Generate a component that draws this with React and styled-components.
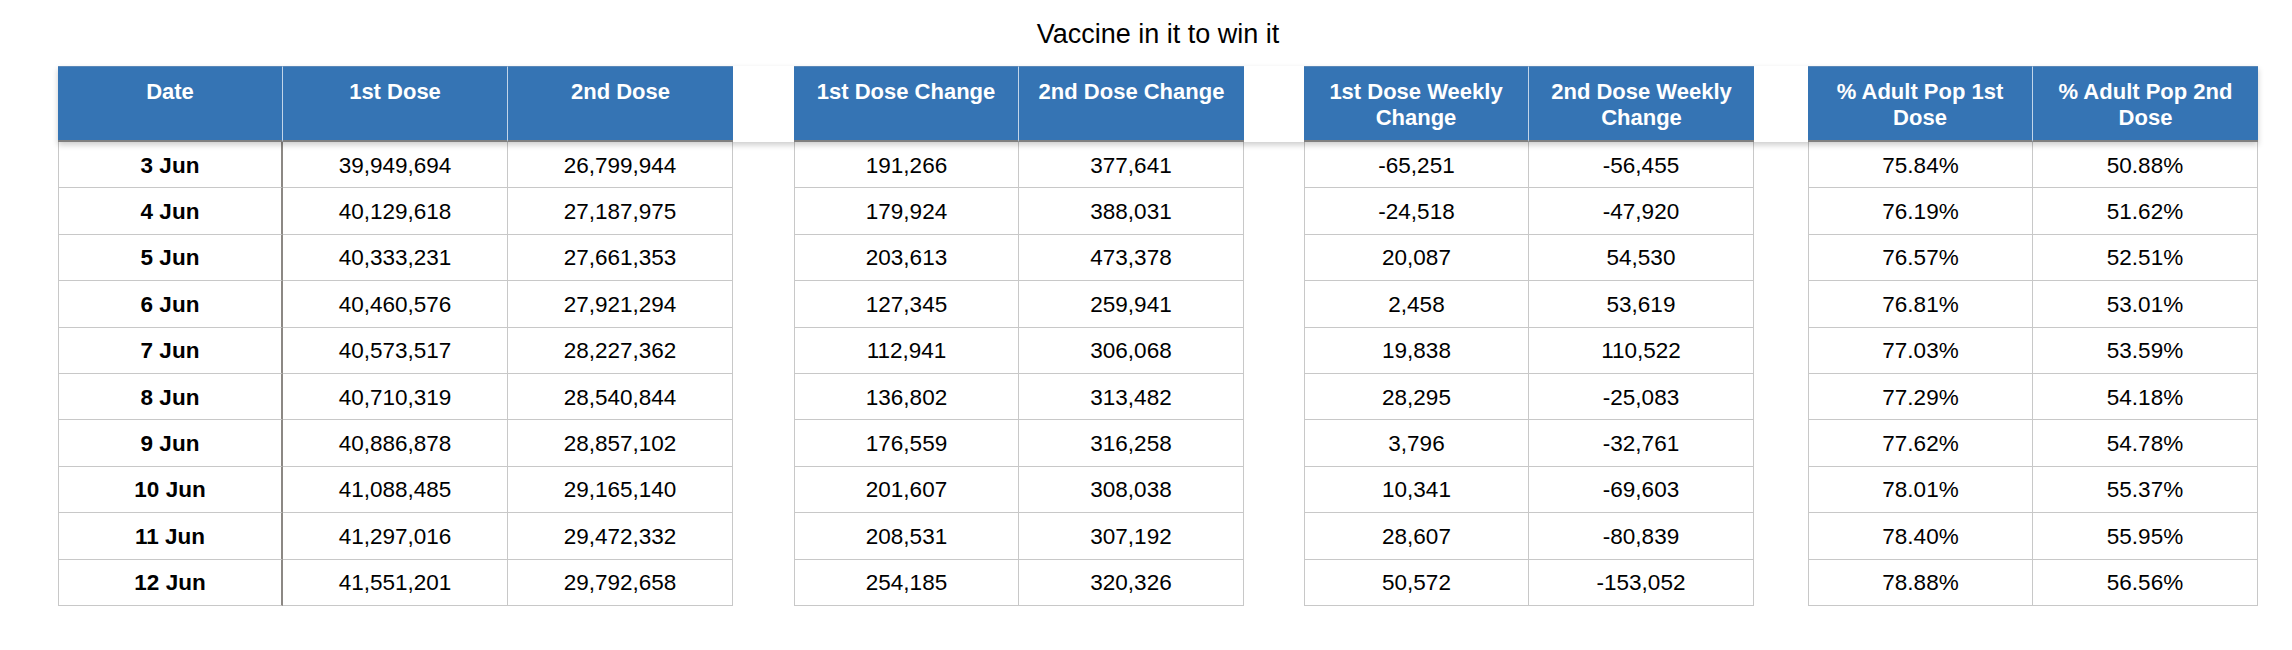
import React from 'react'
import styled, { createGlobalStyle } from 'styled-components'

const groups = [
  { gap: 0, cols: ['Date', '1st Dose', '2nd Dose'] },
  { gap: 61, cols: ['1st Dose Change', '2nd Dose Change'] },
  { gap: 60, cols: ['1st Dose Weekly Change', '2nd Dose Weekly Change'] },
  { gap: 54, cols: ['% Adult Pop 1st Dose', '% Adult Pop 2nd Dose'] },
]

const rows = [
  ['3 Jun', '39,949,694', '26,799,944', '191,266', '377,641', '-65,251', '-56,455', '75.84%', '50.88%'],
  ['4 Jun', '40,129,618', '27,187,975', '179,924', '388,031', '-24,518', '-47,920', '76.19%', '51.62%'],
  ['5 Jun', '40,333,231', '27,661,353', '203,613', '473,378', '20,087', '54,530', '76.57%', '52.51%'],
  ['6 Jun', '40,460,576', '27,921,294', '127,345', '259,941', '2,458', '53,619', '76.81%', '53.01%'],
  ['7 Jun', '40,573,517', '28,227,362', '112,941', '306,068', '19,838', '110,522', '77.03%', '53.59%'],
  ['8 Jun', '40,710,319', '28,540,844', '136,802', '313,482', '28,295', '-25,083', '77.29%', '54.18%'],
  ['9 Jun', '40,886,878', '28,857,102', '176,559', '316,258', '3,796', '-32,761', '77.62%', '54.78%'],
  ['10 Jun', '41,088,485', '29,165,140', '201,607', '308,038', '10,341', '-69,603', '78.01%', '55.37%'],
  ['11 Jun', '41,297,016', '29,472,332', '208,531', '307,192', '28,607', '-80,839', '78.40%', '55.95%'],
  ['12 Jun', '41,551,201', '29,792,658', '254,185', '320,326', '50,572', '-153,052', '78.88%', '56.56%'],
]

// grid template: 225px per column, spacer columns between groups
const template = groups
  .map((g) => (g.gap ? `${g.gap}px ` : '') + g.cols.map(() => '225px').join(' '))
  .join(' ')

// splits a flat row into the same group layout as the headers
const splitRow = (row) => {
  let i = 0
  return groups.map((g) => g.cols.map(() => row[i++]))
}

const App = () => (
  <Page>
    <GlobalStyle />
    <Sheet>
      <Title>Vaccine in it to win it</Title>
      <HeadRow $cols={template}>
        {groups.map((g, gi) => (
          <React.Fragment key={gi}>
            {gi > 0 && <Spacer />}
            {g.cols.map((c, ci) => (
              <HeadCell key={c} $last={ci === g.cols.length - 1}>{c}</HeadCell>
            ))}
          </React.Fragment>
        ))}
      </HeadRow>
      {rows.map((row) => (
        <Row key={row[0]} $cols={template}>
          {splitRow(row).map((cells, gi) => (
            <React.Fragment key={gi}>
              {gi > 0 && <Spacer />}
              {cells.map((v, ci) => (
                <Cell
                  key={ci}
                  $first={ci === 0}
                  $date={gi === 0 && ci === 0}
                >
                  {v}
                </Cell>
              ))}
            </React.Fragment>
          ))}
        </Row>
      ))}
    </Sheet>
  </Page>
)

export default App

const GlobalStyle = createGlobalStyle`
  body {
    margin: 0;
    background: #fff;
    font-family: "Liberation Sans", Arial, sans-serif;
    color: #000;
  }
`

const Page = styled.div`
  padding: 18px 0 0 58px;
`

const Sheet = styled.div`
  width: fit-content;
`

const Title = styled.h1`
  margin: 0 0 16px;
  font-size: 27px;
  line-height: 32px;
  font-weight: normal;
  text-align: center;
  color: #000;
`

const HeadRow = styled.div`
  position: relative;
  z-index: 1;
  display: grid;
  grid-template-columns: ${(p) => p.$cols};
  height: 76px;
  box-shadow: 0 3px 6px rgba(0, 0, 0, 0.2);
`

const HeadCell = styled.div`
  box-sizing: border-box;
  padding: 12px 10px 0;
  background: #3574b4;
  border-top: 1px solid #5a88b8;
  border-bottom: 2px solid #7f7f7f;
  border-right: ${(p) => (p.$last ? 'none' : '1px solid rgba(255, 255, 255, 0.7)')};
  color: #fff;
  font-size: 22px;
  line-height: 26px;
  font-weight: bold;
  text-align: center;
`

const Spacer = styled.div`
  background: #fff;
`

const Row = styled.div`
  display: grid;
  grid-template-columns: ${(p) => p.$cols};
  height: 46.4px;
`

const Cell = styled.div`
  box-sizing: border-box;
  display: flex;
  align-items: center;
  justify-content: center;
  padding-top: 2px;
  background: #fff;
  border-bottom: 1px solid #c8c8c8;
  border-left: ${(p) => (p.$first && !p.$date ? '1px solid #c8c8c8' : 'none')};
  border-right: ${(p) => (p.$date ? '2px solid #8c8884' : '1px solid #c8c8c8')};
  ${(p) => p.$date && 'border-left: 1px solid #c8c8c8;'}
  font-size: 22.5px;
  font-weight: ${(p) => (p.$date ? 'bold' : 'normal')};
  color: #000;
`
